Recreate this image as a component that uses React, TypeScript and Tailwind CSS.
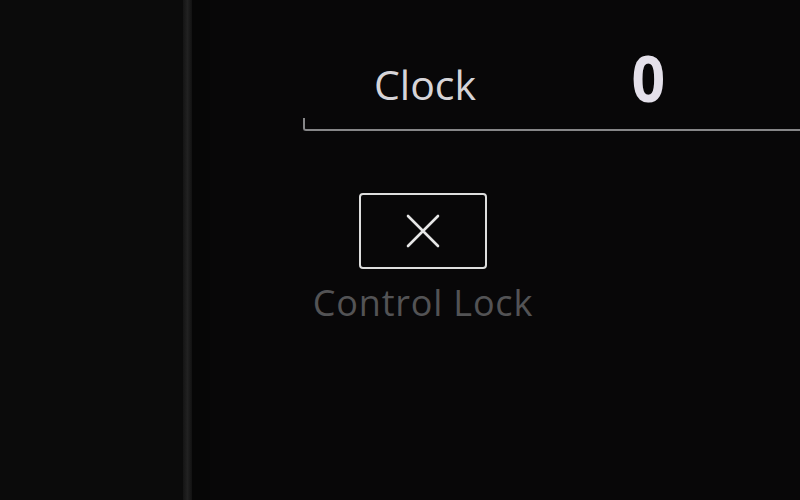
export default function App() {
  return (
    <div
      className="flex h-[500px] w-[800px] overflow-hidden bg-[#0a090a]"
      style={{ fontFamily: '"Open Sans", "Noto Sans", sans-serif' }}
    >
      <div className="h-full w-[183px] bg-[#0b0b0b]" />
      <div className="h-full w-[9px] bg-gradient-to-r from-[#141414] via-[#222222] to-[#111111]" />
      <div className="h-full w-[18px] bg-[#060606]" />
      <div className="flex h-full flex-1 flex-col bg-[#080708]">
        <div className="ml-[93px] flex flex-col">
          <div className="flex items-start">
            <div className="ml-[71px] mt-[64px] text-[41px] leading-[40px] text-[#d6d4d8]">Clock</div>
            <div className="ml-[154px] mt-[46px] scale-x-[0.92] text-[64px] font-bold leading-[64px] text-[#e4e0ea]">0</div>
          </div>
          <div className="mt-[8px] h-[13px] rounded-bl-[3px] border-b-2 border-l-2 border-[#868688]" />
          <div className="mt-[62px] flex w-[240px] flex-col items-center">
            <div className="flex h-[76px] w-[128px] items-center justify-center rounded-[4px] border-2 border-[#dedede]">
              <svg width="36" height="36" viewBox="0 0 36 36" fill="none">
                <path d="M3 3 L33 33 M33 3 L3 33" stroke="#e6e6e6" strokeWidth="2.6" strokeLinecap="round" />
              </svg>
            </div>
            <div className="mt-[16px] whitespace-nowrap text-[36px] leading-[36px] tracking-[0.8px] text-[#535355]">
              Control Lock
            </div>
          </div>
        </div>
      </div>
    </div>
  );
}
